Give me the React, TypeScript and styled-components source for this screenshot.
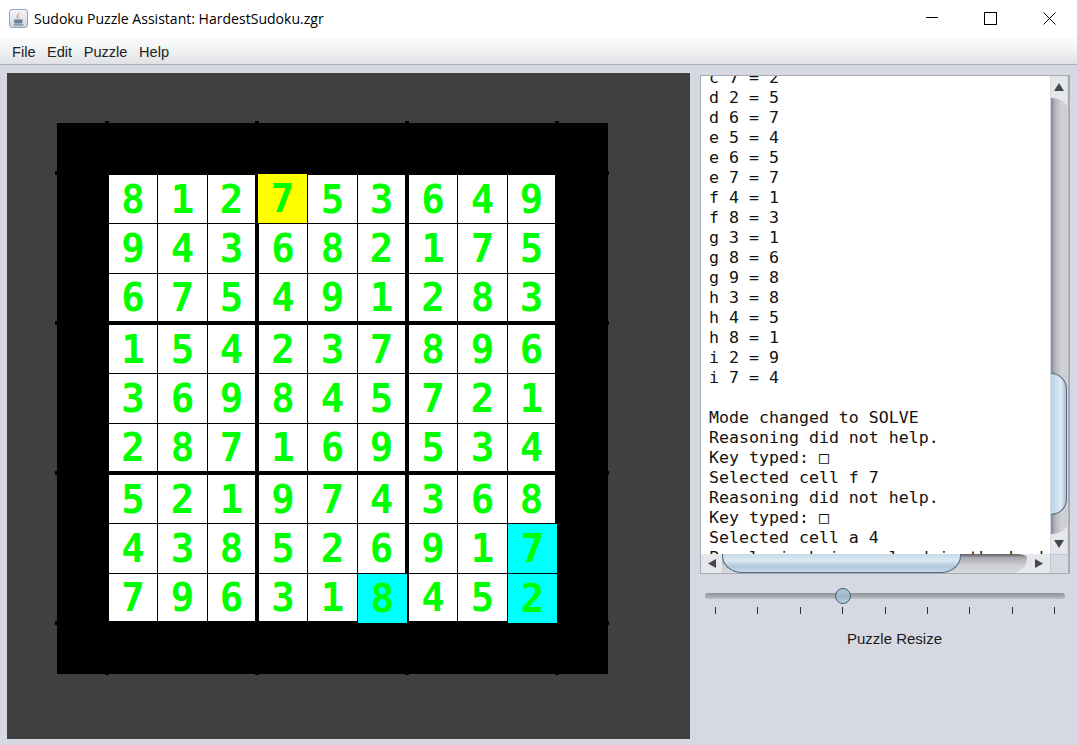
import React from "react"
import styled, { createGlobalStyle } from "styled-components"

const GlobalStyle = createGlobalStyle`
  html, body {
    margin: 0;
    padding: 0;
    background: #d6d9e2;
  }
  * {
    box-sizing: border-box;
  }
`

const Window = styled.div`
  width: 1077px;
  height: 745px;
  display: flex;
  flex-direction: column;
  overflow: hidden;
  background: #d6d9e2;
  font-family: "Liberation Sans", Arial, sans-serif;
`

const TitleBar = styled.div`
  height: 38px;
  flex: none;
  display: flex;
  align-items: center;
  background: #fff;
  padding: 0 0 2px 9px;
`

const TitleText = styled.div`
  margin-left: 6px;
  font-family: "Open Sans", "Noto Sans", sans-serif;
  font-size: 14.05px;
  color: #000;
  white-space: nowrap;
`

const Controls = styled.div`
  margin-left: auto;
  display: flex;
  align-items: center;
  gap: 46px;
  padding-right: 21px;

  svg {
    display: block;
  }
`

const MenuBar = styled.div`
  height: 27px;
  flex: none;
  display: flex;
  align-items: center;
  gap: 11.5px;
  padding: 1px 0 0 12px;
  background: linear-gradient(#fafbfa 0%, #f4f5f5 35%, #dfe1e4 100%);
  border-bottom: 1px solid #a9aeb9;
`

const MenuItem = styled.div`
  font-size: 14.6px;
  color: #222;
`

const Main = styled.div`
  flex: 1;
  display: flex;
  padding: 8px 0 6px 7px;
`

const Board = styled.div`
  width: 683px;
  height: 666px;
  flex: none;
  background: #404040;
  padding: 50px;
`

const BlackSquare = styled.div`
  position: relative;
  width: 551px;
  height: 551px;
  background: #000;
  padding: 51px;
`

const Tick = styled.div<{ $x: number; $y: number; $w: number; $h: number }>`
  position: absolute;
  left: ${(p) => p.$x}px;
  top: ${(p) => p.$y}px;
  width: ${(p) => p.$w}px;
  height: ${(p) => p.$h}px;
  background: #000;
`

const Grid = styled.div`
  display: grid;
  grid-template-columns: repeat(9, 50px);
  grid-template-rows: repeat(9, 50px);
`

const Cell = styled.div<{ $row: number; $col: number; $fill?: string }>`
  display: flex;
  align-items: center;
  justify-content: center;
  background: ${(p) => p.$fill || "#fff"};
  margin: ${(p) =>
    p.$fill
      ? "0 1px 1px 0"
      : `${p.$row % 3 == 0 ? 1 : 0}px ${p.$col % 3 == 2 ? 3 : 1}px ${p.$row % 3 == 2 ? 3 : 1}px ${p.$col % 3 == 0 ? 1 : 0}px`};
  font-family: "DejaVu Sans Mono", monospace;
  font-weight: 700;
  font-size: 39px;
  line-height: 1;
  color: #00ff00;
`

const Side = styled.div`
  width: 370px;
  margin-left: 10px;
  padding-top: 2px;
  display: flex;
  flex-direction: column;
`

const ScrollPane = styled.div`
  height: 499px;
  flex: none;
  display: grid;
  grid-template-columns: 349px 1fr;
  grid-template-rows: 478px 1fr;
  border: 1px solid #a8abb3;
  border-right-width: 2px;
  background: #d6d9e2;
`

const LogArea = styled.div`
  background: #fff;
  overflow: hidden;
  padding-left: 8px;
  font-family: "DejaVu Sans Mono", monospace;
  font-size: 16.6px;
  line-height: 20px;
  color: #111;
`

const LogText = styled.pre`
  margin: -8px 0 0;
  font: inherit;
  white-space: pre;
`

const VBar = styled.div`
  display: flex;
  flex-direction: column;
  background: #e6e7eb;
  margin-left: 1px;
  border-right: 1px solid #d6d9e2;
`

const VButton = styled.div<{ $h: number }>`
  height: ${(p) => p.$h}px;
  flex: none;
  display: flex;
  align-items: center;
  justify-content: center;
  padding-right: 1px;
`

const VTrack = styled.div`
  flex: 1;
  display: flex;
  flex-direction: column;
  padding-top: 275px;
  background: linear-gradient(90deg, #85888f 0%, #b9bbc1 30%, #d0d2d6 70%, #c9cbd0 100%);
  border-radius: 0 16px 16px 0 / 0 10px 10px 0;
`

const VThumb = styled.div`
  height: 142px;
  flex: none;
  border: 1.5px solid #4f6b85;
  border-left: 0;
  border-radius: 0 17px 17px 0;
  background: linear-gradient(90deg, #b9d4e8 0%, #cfe2f0 45%, #dfeaf3 65%, #a9bfd2 100%);
`

const HBar = styled.div`
  display: flex;
  background: #e6e7eb;
`

const HButton = styled.div<{ $w: number }>`
  width: ${(p) => p.$w}px;
  flex: none;
  display: flex;
  align-items: center;
  justify-content: center;
`

const HTrack = styled.div`
  flex: 1;
  background: linear-gradient(#5b5d62 0%, #a9abb1 20%, #cdcfd3 60%, #d8d9dd 100%);
  border-radius: 0 12px 16px 0 / 0 4px 16px 0;
`

const HThumb = styled.div`
  width: 239px;
  height: 100%;
  border: 1.5px solid #4f6b85;
  border-top: 0;
  border-radius: 0 0 20px 20px / 0 0 17px 17px;
  background: linear-gradient(#c6d9e8 0%, #dbe8f1 35%, #b0c8da 70%, #c8d8e4 100%);
`

const Corner = styled.div`
  background: #d6d9e2;
  border-left: 1px solid #c2c5cc;
  border-top: 1px solid #c2c5cc;
`

const SliderBox = styled.div`
  padding: 19px 5px 0;
`

const SliderTrack = styled.div`
  position: relative;
  height: 6px;
  border-radius: 3px;
  background: linear-gradient(#8f939c 0%, #a6a9b1 60%, #c3c6ce 100%);
`

const SliderThumb = styled.div`
  position: absolute;
  left: 130px;
  top: -5px;
  width: 16px;
  height: 16px;
  border-radius: 50%;
  border: 1.5px solid #46596c;
  background: linear-gradient(#b5c8d8 0%, #9fb5c9 55%, #c0d1de 100%);
`

const TickRow = styled.div`
  display: flex;
  justify-content: space-between;
  padding: 8px 10px 0;
`

const SliderMark = styled.div`
  width: 1px;
  height: 7px;
  background: #333;
`

const SliderLabel = styled.div`
  margin-top: 16px;
  padding-left: 19px;
  text-align: center;
  font-size: 15px;
  color: #1a1a1a;
`

const puzzle = [
  "812753649",
  "943682175",
  "675491283",
  "154237896",
  "369845721",
  "287169534",
  "521974368",
  "438526917",
  "796318452",
]

const fills: Record<string, string> = {
  "0-3": "#ffff00",
  "7-8": "#00ffff",
  "8-5": "#00ffff",
  "8-8": "#00ffff",
}

const logLines = [
  "c 7 = 2",
  "d 2 = 5",
  "d 6 = 7",
  "e 5 = 4",
  "e 6 = 5",
  "e 7 = 7",
  "f 4 = 1",
  "f 8 = 3",
  "g 3 = 1",
  "g 8 = 6",
  "g 9 = 8",
  "h 3 = 8",
  "h 4 = 5",
  "h 8 = 1",
  "i 2 = 9",
  "i 7 = 4",
  "",
  "Mode changed to SOLVE",
  "Reasoning did not help.",
  "Key typed: \u25a1",
  "Selected cell f 7",
  "Reasoning did not help.",
  "Key typed: \u25a1",
  "Selected cell a 4",
  "Puzzle is being solved in the backgrou",
]

// the little nubs the board paints just outside the black square
const ticks = [50, 200, 350, 500].flatMap((at) => [
  { x: at - 2, y: -2, w: 4, h: 2 },
  { x: at - 2, y: 551, w: 4, h: 1 },
  { x: -2, y: at - 2, w: 2, h: 4 },
  { x: 551, y: at - 2, w: 1, h: 4 },
])

const JavaIcon = () => (
  <svg width="19" height="19" viewBox="0 0 19 19">
    <defs>
      <linearGradient id="javaBg" x1="0" y1="0" x2="0" y2="1">
        <stop offset="0" stopColor="#f4f6f9" />
        <stop offset="1" stopColor="#cfd6e0" />
      </linearGradient>
    </defs>
    <rect x="0.5" y="0.5" width="18" height="18" rx="2.5" fill="url(#javaBg)" stroke="#8fa3ba" />
    <path d="M10 3c1.5 2-2 3-1 5.5.4 1 1 1.5 1 1.5-2-.6-3-2.200-2-3.800C8.800 5 10.500 4.500 10 3z" fill="#e8762b" />
    <path d="M11.500 6c-.2 1-1.800 1.500-1 3.500-.8-1.500.2-2.800 1-3.500z" fill="#e8762b" />
    <path d="M5 10.500h8.500v2.500c0 1-1 1.500-2 1.500H7c-1 0-2-.5-2-1.500z" fill="#6d8299" />
    <path d="M4 15.500h11c-.5.8-1.500 1-3 1H7c-1.500 0-2.500-.2-3-1z" fill="#52687f" />
  </svg>
)

const Triangle = ({ dir }: { dir: "up" | "down" | "left" | "right" }) => {
  const points = {
    up: "0,8 5,0 10,8",
    down: "0,0 10,0 5,8",
    left: "8,0 8,9 0,4.500",
    right: "0,0 0,9 8,4.500",
  }
  return (
    <svg width={dir == "up" || dir == "down" ? 10 : 8} height={dir == "up" || dir == "down" ? 8 : 9}>
      <polygon points={points[dir]} fill="#45484e" />
    </svg>
  )
}

const App = () => {
  return (
    <Window>
      <GlobalStyle />
      <TitleBar>
        <JavaIcon />
        <TitleText>Sudoku Puzzle Assistant: HardestSudoku.zgr</TitleText>
        <Controls>
          <svg width="12" height="12" viewBox="0 0 12 12">
            <path d="M0 5.500h12" stroke="#000" fill="none" />
          </svg>
          <svg width="13" height="13" viewBox="0 0 13 13">
            <rect x="0.500" y="0.500" width="12" height="12" stroke="#000" fill="none" />
          </svg>
          <svg width="13" height="13" viewBox="0 0 13 13">
            <path d="M0.500 0.500l12 12M12.500 0.500l-12 12" stroke="#000" fill="none" />
          </svg>
        </Controls>
      </TitleBar>
      <MenuBar>
        <MenuItem>File</MenuItem>
        <MenuItem>Edit</MenuItem>
        <MenuItem>Puzzle</MenuItem>
        <MenuItem>Help</MenuItem>
      </MenuBar>
      <Main>
        <Board>
          <BlackSquare>
            {ticks.map((t, i) => (
              <Tick key={i} $x={t.x} $y={t.y} $w={t.w} $h={t.h} />
            ))}
            <Grid>
              {puzzle.map((row, r) =>
                row.split("").map((digit, c) => (
                  <Cell key={`${r}-${c}`} $row={r} $col={c} $fill={fills[`${r}-${c}`]}>
                    {digit}
                  </Cell>
                )),
              )}
            </Grid>
          </BlackSquare>
        </Board>
        <Side>
          <ScrollPane>
            <LogArea>
              <LogText>{logLines.join("\n")}</LogText>
            </LogArea>
            <VBar>
              <VButton $h={22}>
                <Triangle dir="up" />
              </VButton>
              <VTrack>
                <VThumb />
              </VTrack>
              <VButton $h={20}>
                <Triangle dir="down" />
              </VButton>
            </VBar>
            <HBar>
              <HButton $w={21}>
                <Triangle dir="left" />
              </HButton>
              <HTrack>
                <HThumb />
              </HTrack>
              <HButton $w={23}>
                <Triangle dir="right" />
              </HButton>
            </HBar>
            <Corner />
          </ScrollPane>
          <SliderBox>
            <SliderTrack>
              <SliderThumb />
            </SliderTrack>
            <TickRow>
              {Array.from({ length: 9 }).map((_, i) => (
                <SliderMark key={i} />
              ))}
            </TickRow>
          </SliderBox>
          <SliderLabel>Puzzle Resize</SliderLabel>
        </Side>
      </Main>
    </Window>
  )
}

export default App
